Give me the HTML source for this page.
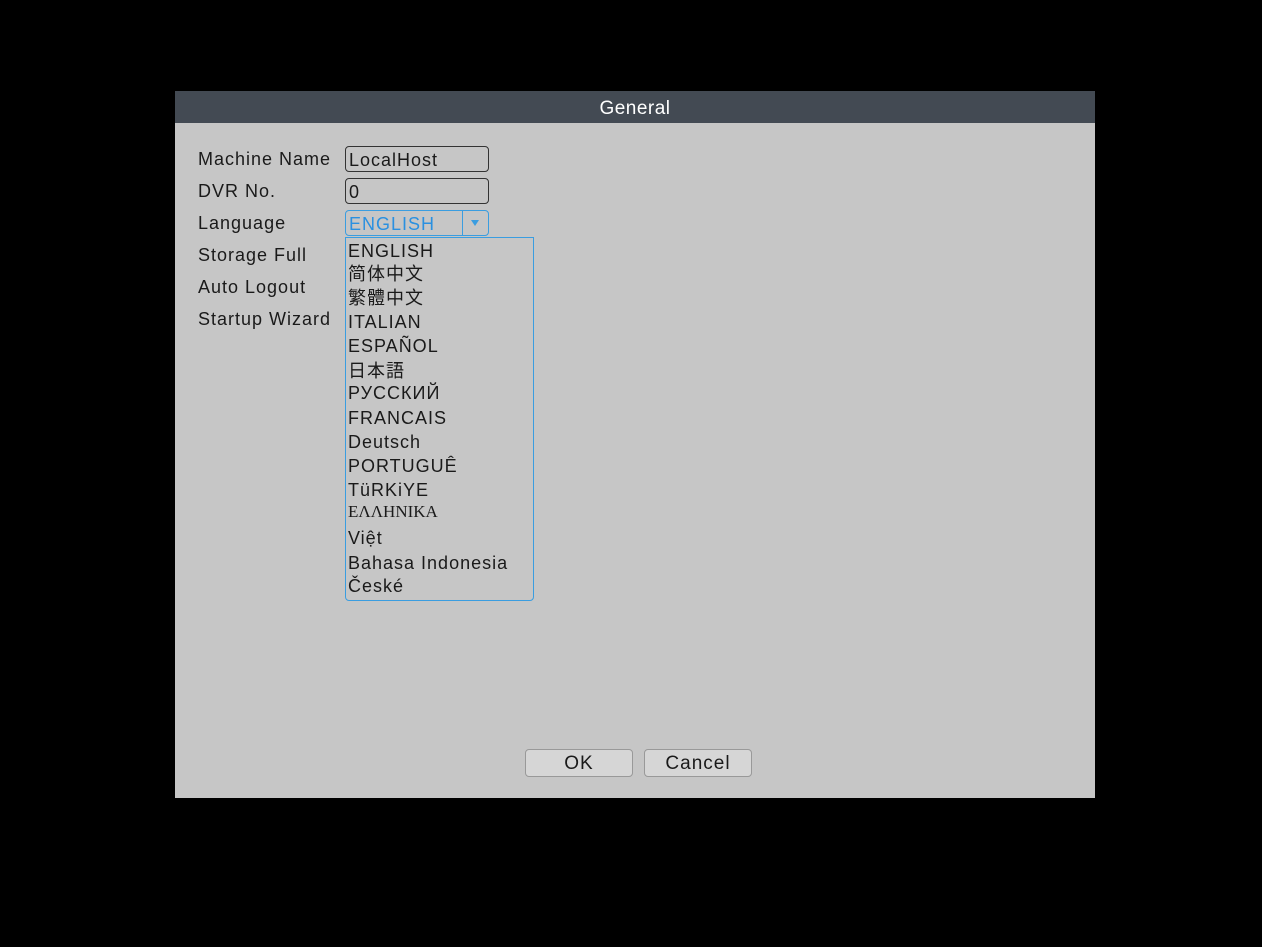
<!DOCTYPE html>
<html><head><meta charset="utf-8"><style>
body{margin:0;width:1262px;height:947px;background:#000;position:relative;overflow:hidden;font-family:"Liberation Sans","Noto Sans CJK SC",sans-serif;color:#1a1a1a}
.dlg{position:absolute;left:175px;top:91px;width:920px;height:707px;background:#c6c6c6}
.title{position:absolute;left:0;top:0;width:920px;height:32px;background:#434a53;color:#fff;font-size:19px;text-align:center;line-height:36px;letter-spacing:0.5px}
.t{position:absolute;font-size:18px;white-space:nowrap;line-height:22px;letter-spacing:1px}
.box{position:absolute;border:1px solid #333;border-radius:4px;height:26px;box-sizing:border-box}
.btn{position:absolute;top:658px;width:108px;height:28px;border:1px solid #999;border-radius:4px;background:#d6d6d6;box-sizing:border-box;text-align:center;font-size:19px;line-height:28px;letter-spacing:1px}
</style></head><body>
<div class="dlg">
<div class="title">General</div>
<div class="t" style="left:23px;top:57px">Machine Name</div>
<div class="t" style="left:23px;top:89px">DVR No.</div>
<div class="t" style="left:23px;top:121px">Language</div>
<div class="t" style="left:23px;top:153px">Storage Full</div>
<div class="t" style="left:23px;top:185px">Auto Logout</div>
<div class="t" style="left:23px;top:217px">Startup Wizard</div>
<div class="box" style="left:170px;top:55px;width:144px"></div>
<div class="t" style="left:174px;top:58px">LocalHost</div>
<div class="box" style="left:170px;top:87px;width:144px"></div>
<div class="t" style="left:174px;top:90px">0</div>
<div class="box" style="left:170px;top:119px;width:144px;border-color:#3a9de0"></div>
<div style="position:absolute;left:287px;top:120px;width:1px;height:24px;background:#3a9de0"></div>
<div style="position:absolute;left:296px;top:129px;width:0;height:0;border-left:4px solid transparent;border-right:4px solid transparent;border-top:6px solid #3a9de0"></div>
<div class="t" style="left:174px;top:122px;color:#2a90e0">ENGLISH</div>
<div style="position:absolute;left:170px;top:146px;width:189px;height:364px;border:1px solid #3a9de0;border-radius:0 0 4px 4px;box-sizing:border-box"></div>
<div class="t" style="left:173px;top:149px">ENGLISH</div>
<div class="t" style="left:173px;top:172px">简体中文</div>
<div class="t" style="left:173px;top:196px">繁體中文</div>
<div class="t" style="left:173px;top:220px">ITALIAN</div>
<div class="t" style="left:173px;top:244px">ESPAÑOL</div>
<div class="t" style="left:173px;top:268px;font-family:'Noto Sans CJK JP',sans-serif;line-height:22px">日本語</div>
<div class="t" style="left:173px;top:291px">РУССКИЙ</div>
<div class="t" style="left:173px;top:316px">FRANCAIS</div>
<div class="t" style="left:173px;top:340px">Deutsch</div>
<div class="t" style="left:173px;top:364px">PORTUGUÊ</div>
<div class="t" style="left:173px;top:388px">TüRKiYE</div>
<div class="t" style="left:173px;top:410px;font-family:'Liberation Serif',serif;font-size:17px;letter-spacing:0">ΕΛΛΗΝΙΚΑ</div>
<div class="t" style="left:173px;top:436px">Việt</div>
<div class="t" style="left:173px;top:461px">Bahasa Indonesia</div>
<div class="t" style="left:173px;top:484px">České</div>
<div class="btn" style="left:350px">OK</div>
<div class="btn" style="left:469px">Cancel</div>
</div>
</body></html>
